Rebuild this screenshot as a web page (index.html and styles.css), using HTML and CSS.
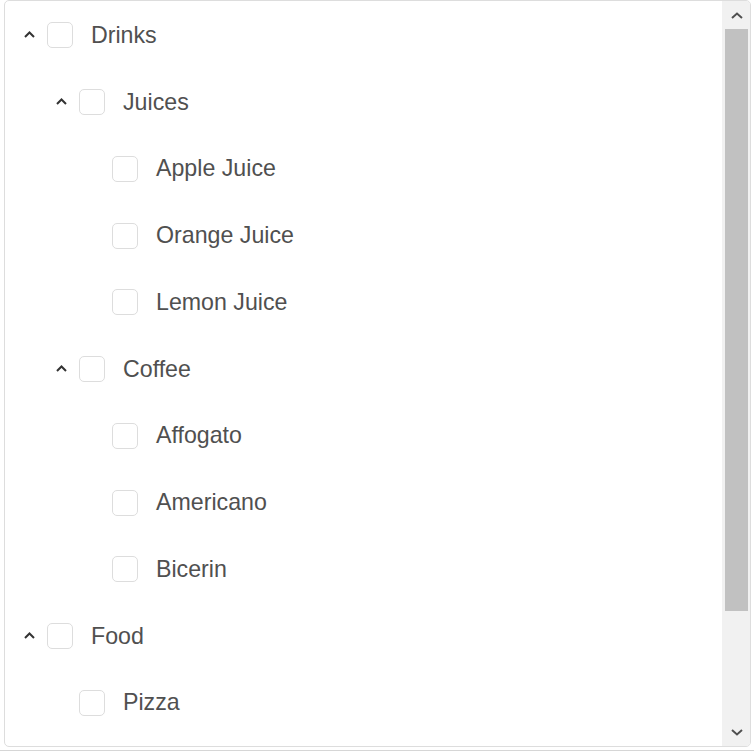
FILE: index.html
```html
<!DOCTYPE html>
<html lang="en">
<head>
  <meta charset="UTF-8">
  <title>Tree View</title>
  <link rel="stylesheet" href="styles.css">
</head>
<body>
  <div class="tree">
    <div class="tree-scroll">
      <ul class="tree-list">
        <li class="node level-0">
          <span class="toggle"><svg viewBox="0 0 11 7" width="11" height="7"><polyline points="1,6 5.5,1.5 10,6"/></svg></span>
          <span class="check"></span><span class="label">Drinks</span>
        </li>
        <li class="node level-1">
          <span class="toggle"><svg viewBox="0 0 11 7" width="11" height="7"><polyline points="1,6 5.5,1.5 10,6"/></svg></span>
          <span class="check"></span><span class="label">Juices</span>
        </li>
        <li class="node level-2"><span class="toggle"></span><span class="check"></span><span class="label">Apple Juice</span></li>
        <li class="node level-2"><span class="toggle"></span><span class="check"></span><span class="label">Orange Juice</span></li>
        <li class="node level-2"><span class="toggle"></span><span class="check"></span><span class="label">Lemon Juice</span></li>
        <li class="node level-1">
          <span class="toggle"><svg viewBox="0 0 11 7" width="11" height="7"><polyline points="1,6 5.5,1.5 10,6"/></svg></span>
          <span class="check"></span><span class="label">Coffee</span>
        </li>
        <li class="node level-2"><span class="toggle"></span><span class="check"></span><span class="label">Affogato</span></li>
        <li class="node level-2"><span class="toggle"></span><span class="check"></span><span class="label">Americano</span></li>
        <li class="node level-2"><span class="toggle"></span><span class="check"></span><span class="label">Bicerin</span></li>
        <li class="node level-0">
          <span class="toggle"><svg viewBox="0 0 11 7" width="11" height="7"><polyline points="1,6 5.5,1.5 10,6"/></svg></span>
          <span class="check"></span><span class="label">Food</span>
        </li>
        <li class="node level-1"><span class="toggle"></span><span class="check"></span><span class="label">Pizza</span></li>
      </ul>
    </div>
    <div class="scrollbar">
      <div class="sb-btn">
        <svg viewBox="0 0 12 7" width="12" height="7"><polyline points="1,6 6,1.5 11,6"/></svg>
      </div>
      <div class="sb-track"><div class="sb-thumb"></div></div>
      <div class="sb-btn sb-btn-down">
        <svg viewBox="0 0 12 7" width="12" height="7"><polyline points="1,1 6,5.5 11,1"/></svg>
      </div>
    </div>
  </div>
  <div class="page-edge"></div>
</body>
</html>
```

FILE: styles.css
```css
body {
  margin: 0;
  background-color: #fff;
  font-family: "Liberation Sans", Arial, sans-serif;
}
.tree {
  display: flex;
  box-sizing: border-box;
  width: 747px;
  height: 747px;
  margin: 0 0 0 4px;
  border: 1px solid #ddd;
  border-radius: 5px;
  overflow: hidden;
  background-color: #fff;
}
.tree-scroll {
  flex: 1;
  overflow: hidden;
}
.tree-list {
  list-style: none;
  margin: 0;
  padding: 1px 0 0;
}
.node {
  display: flex;
  align-items: center;
  height: 66.75px;
  color: #505050;
  font-size: 23.2px;
}
.level-0 { padding-left: 19px; }
.level-1 { padding-left: 51px; }
.level-2 { padding-left: 84px; }
.toggle {
  display: flex;
  align-items: center;
  width: 11px;
  height: 7px;
  margin-right: 12px;
  margin-top: -2px;
}
.toggle svg polyline {
  fill: none;
  stroke: #333;
  stroke-width: 2;
}
.check {
  box-sizing: border-box;
  width: 26px;
  height: 26px;
  border: 1px solid #ddd;
  border-radius: 5px;
  background-color: #fff;
  flex-shrink: 0;
}
.label {
  margin-left: 18px;
}
.scrollbar {
  display: flex;
  flex-direction: column;
  width: 28px;
  background-color: #f1f1f1;
}
.sb-btn {
  height: 28px;
  display: flex;
  align-items: center;
  justify-content: center;
  padding-left: 1px;
}
.sb-btn svg polyline {
  fill: none;
  stroke: #505050;
  stroke-width: 2;
}
.sb-btn-down {
  height: 28px;
}
.sb-track {
  flex: 1;
  padding: 0 2px 0 3px;
}
.sb-thumb {
  height: 582px;
  background-color: #c1c1c1;
}
.page-edge {
  height: 1px;
  margin-top: 3px;
  background-color: #d6d6d6;
}
```
